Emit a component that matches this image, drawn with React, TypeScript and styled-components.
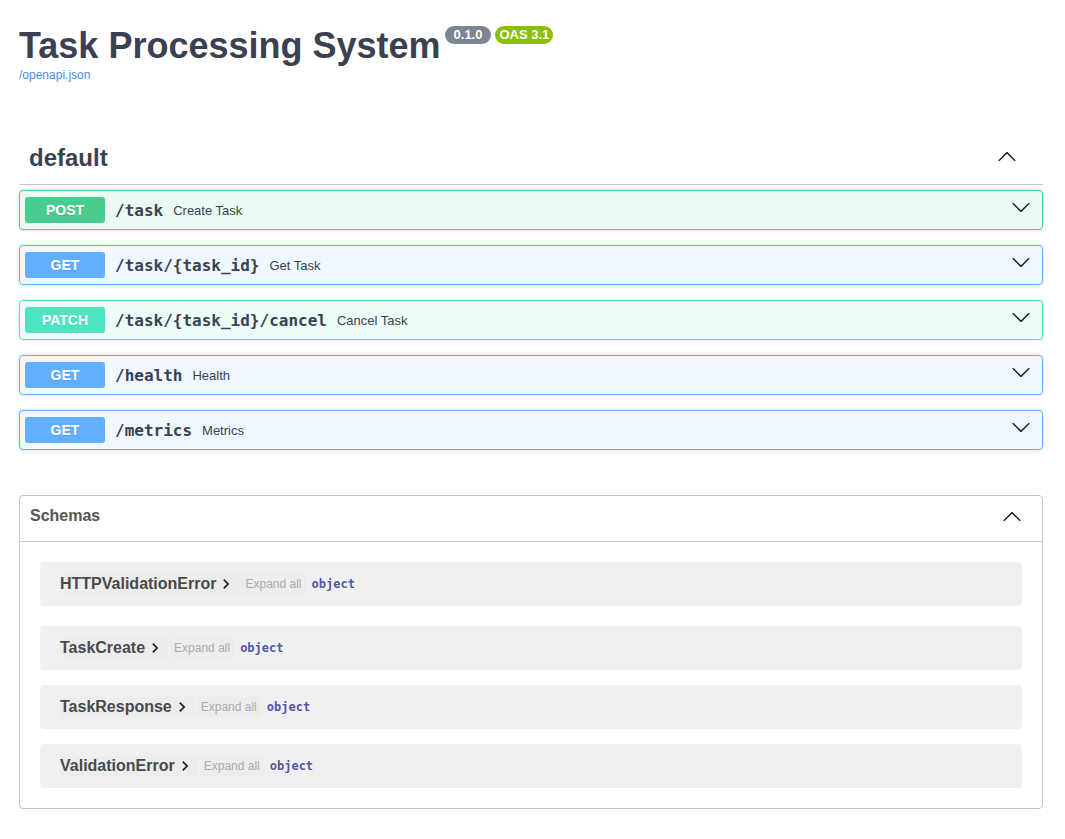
import React from "react";
import styled, { createGlobalStyle } from "styled-components";

const GlobalStyle = createGlobalStyle`
  html, body { margin: 0; padding: 0; background: #ffffff; }
  body { font-family: "Liberation Sans", Arial, sans-serif; color: #3b4151; }
  * { box-sizing: border-box; }
`;

const Page = styled.div`
  margin: 0 22px 0 19px;
  padding: 25px 0 30px;
`;

const Info = styled.header`
  margin-bottom: 54px;
`;

const TitleRow = styled.div`
  display: flex;
  align-items: flex-start;
`;

const Title = styled.h2`
  margin: 0;
  font-size: 36px;
  line-height: 41px;
  font-weight: 700;
  color: #3b4151;
`;

const Stamp = styled.span<{ $bg: string; $pad: number }>`
  margin: 1px 0 0 4px;
  height: 18px;
  line-height: 18px;
  padding: 0 ${(p) => p.$pad}px;
  border-radius: 57px;
  background: ${(p) => p.$bg};
  color: #ffffff;
  font-size: 13px;
  font-weight: 700;
`;

const SpecLink = styled.a`
  display: block;
  margin-top: 2px;
  font-size: 12px;
  line-height: 14px;
  color: #4990e2;
  text-decoration: none;
`;

const TagHeader = styled.div`
  display: flex;
  align-items: flex-start;
  justify-content: space-between;
  padding: 8px 26px 12px 10px;
  border-bottom: 1px solid rgba(59, 65, 81, 0.3);
  margin-bottom: 5px;
`;

const TagName = styled.h3`
  margin: 0;
  font-size: 24px;
  line-height: 28px;
  font-weight: 700;
  color: #3b4151;
`;

const ArrowButton = styled.span<{ $top: number }>`
  display: block;
  width: 20px;
  height: 20px;
  margin-top: ${(p) => p.$top}px;
  flex: none;
`;

const OpList = styled.div`
  display: flex;
  flex-direction: column;
  gap: 15px;
`;

const Op = styled.div<{ $c: string; $bg: string }>`
  display: flex;
  align-items: center;
  height: 40px;
  padding: 0 11px 0 5px;
  border: 1px solid ${(p) => p.$c};
  background: ${(p) => p.$bg};
  border-radius: 4px;
  box-shadow: 0 0 3px rgba(0, 0, 0, 0.19);
`;

const Method = styled.span<{ $c: string }>`
  display: flex;
  align-items: center;
  justify-content: center;
  width: 80px;
  height: 26px;
  border-radius: 3px;
  background: ${(p) => p.$c};
  color: #ffffff;
  font-size: 14px;
  font-weight: 700;
  text-shadow: 0 1px 0 rgba(0, 0, 0, 0.1);
  flex: none;
`;

const Path = styled.span`
  padding: 0 10px;
  font-family: "DejaVu Sans Mono", "Liberation Mono", monospace;
  font-size: 16px;
  font-weight: 700;
  color: #3b4151;
`;

const Desc = styled.span`
  flex: 1;
  font-size: 13px;
  color: #3b4151;
`;

const OpArrow = styled.span`
  display: block;
  width: 20px;
  height: 20px;
  align-self: flex-start;
  margin-top: 6px;
`;

const Models = styled.section`
  margin-top: 45px;
  border: 1px solid rgba(59, 65, 81, 0.3);
  border-radius: 4px;
`;

const ModelsHeader = styled.div`
  display: flex;
  align-items: flex-start;
  justify-content: space-between;
  height: 46px;
  padding: 11px 20px 0 10px;
  border-bottom: 1px solid rgba(59, 65, 81, 0.3);
`;

const ModelsTitle = styled.h4`
  margin: 0;
  font-size: 16px;
  line-height: 18px;
  font-weight: 700;
  color: #555555;
`;

const ModelList = styled.div`
  padding: 20px 20px 5px;
`;

const ModelCard = styled.div`
  display: flex;
  align-items: center;
  height: 44px;
  padding: 0 20px;
  margin-bottom: 15px;
  border-radius: 4px;
  background: rgba(0, 0, 0, 0.06);
  &:first-child {
    margin-bottom: 20px;
  }
`;

const ModelToggle = styled.span`
  display: inline-flex;
  align-items: center;
  height: 20px;
  padding-right: 3px;
  background: rgba(0, 0, 0, 0.01);
  font-size: 16px;
  font-weight: 700;
  color: #4a4a4a;
`;

const ExpandAll = styled.span`
  display: inline-flex;
  align-items: center;
  height: 20px;
  margin-left: 2px;
  padding: 0 4px;
  background: rgba(0, 0, 0, 0.01);
  font-size: 12px;
  color: #aaaaaa;
`;

const TypeName = styled.span`
  margin-left: 6px;
  font-family: "DejaVu Sans Mono", "Liberation Mono", monospace;
  font-size: 12px;
  font-weight: 700;
  color: #55a;
`;

const Chevron = ({ up }: { up?: boolean }) => (
  <svg
    width="20"
    height="20"
    viewBox="0 0 20 20"
    style={up ? { transform: "rotate(180deg)" } : undefined}
  >
    <path
      fill="#222"
      d="M17.418 6.109c.272-.268.709-.268.979 0s.271.701 0 .969l-7.908 7.83c-.27.268-.707.268-.979 0l-7.908-7.83c-.27-.268-.27-.701 0-.969.271-.268.709-.268.979 0L10 13.25l7.418-7.141z"
    />
  </svg>
);

const NextIcon = () => (
  <svg width="20" height="20" viewBox="0 0 24 24">
    <path fill="#222" d="M10 6L8.59 7.41 13.17 12l-4.58 4.59L10 18l6-6z" />
  </svg>
);

const COLORS = {
  POST: { c: "#49cc90", bg: "rgba(73,204,144,.1)" },
  GET: { c: "#61affe", bg: "rgba(97,175,254,.1)" },
  PATCH: { c: "#50e3c2", bg: "rgba(80,227,194,.1)" },
} as const;

const ops: { method: keyof typeof COLORS; path: string; desc: string }[] = [
  { method: "POST", path: "/task", desc: "Create Task" },
  { method: "GET", path: "/task/{task_id}", desc: "Get Task" },
  { method: "PATCH", path: "/task/{task_id}/cancel", desc: "Cancel Task" },
  { method: "GET", path: "/health", desc: "Health" },
  { method: "GET", path: "/metrics", desc: "Metrics" },
];

const schemas = ["HTTPValidationError", "TaskCreate", "TaskResponse", "ValidationError"];

export default function App() {
  return (
    <>
      <GlobalStyle />
      <Page>
        <Info>
          <TitleRow>
            <Title>Task Processing System</Title>
            <Stamp $bg="#7d8492" $pad={9}>0.1.0</Stamp>
            <Stamp $bg="#89bf04" $pad={4}>OAS 3.1</Stamp>
          </TitleRow>
          <SpecLink href="#">/openapi.json</SpecLink>
        </Info>

        <section>
          <TagHeader>
            <TagName>default</TagName>
            <ArrowButton $top={3}>
              <Chevron up />
            </ArrowButton>
          </TagHeader>
          <OpList>
            {ops.map((op) => (
              <Op key={op.method + op.path} $c={COLORS[op.method].c} $bg={COLORS[op.method].bg}>
                <Method $c={COLORS[op.method].c}>{op.method}</Method>
                <Path>{op.path}</Path>
                <Desc>{op.desc}</Desc>
                <OpArrow>
                  <Chevron />
                </OpArrow>
              </Op>
            ))}
          </OpList>
        </section>

        <Models>
          <ModelsHeader>
            <ModelsTitle>Schemas</ModelsTitle>
            <ArrowButton $top={0}>
              <Chevron up />
            </ArrowButton>
          </ModelsHeader>
          <ModelList>
            {schemas.map((s) => (
              <ModelCard key={s}>
                <ModelToggle>
                  {s}
                  <NextIcon />
                </ModelToggle>
                <ExpandAll>Expand all</ExpandAll>
                <TypeName>object</TypeName>
              </ModelCard>
            ))}
          </ModelList>
        </Models>
      </Page>
    </>
  );
}
